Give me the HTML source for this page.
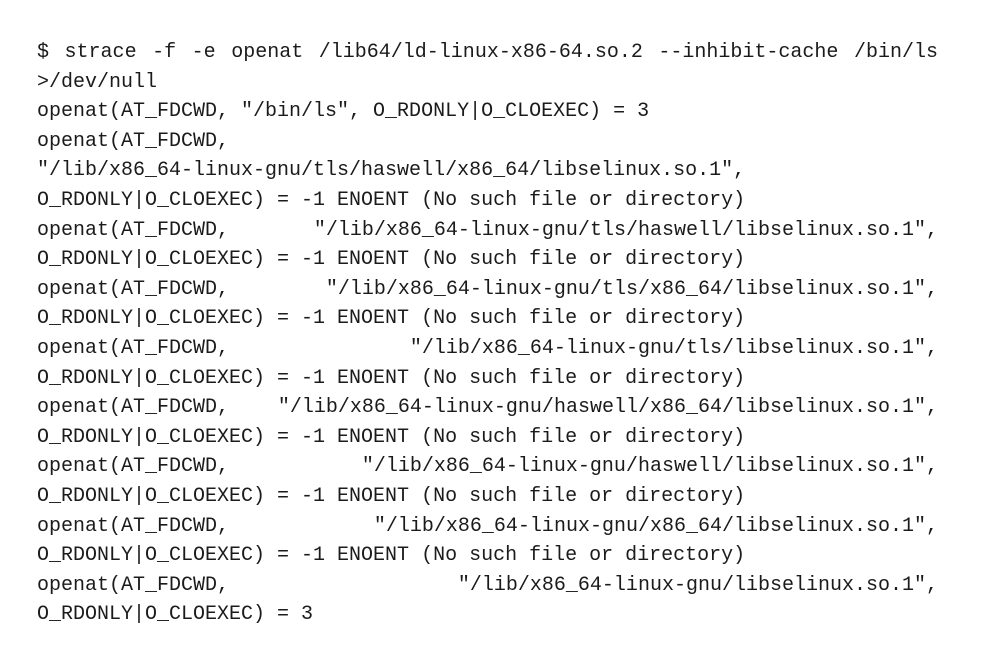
<!DOCTYPE html>
<html><head><meta charset="utf-8"><style>
html,body{margin:0;padding:0;background:#fff;width:986px;height:646px;overflow:hidden}
#t{position:absolute;left:37px;top:38px;width:901px;font-family:"Liberation Mono",monospace;font-size:20px;line-height:29.6px;color:#1b1b1b}
.l{white-space:pre;height:29.6px}
.j{white-space:normal;text-align:justify;text-align-last:justify;height:29.6px;overflow:hidden}
</style></head><body><div id="t">
<div class="j">$ strace -f -e openat /lib64/ld-linux-x86-64.so.2 --inhibit-cache /bin/ls</div>
<div class="l">&gt;/dev/null</div>
<div class="l">openat(AT_FDCWD, "/bin/ls", O_RDONLY|O_CLOEXEC) = 3</div>
<div class="l">openat(AT_FDCWD,</div>
<div class="l">"/lib/x86_64-linux-gnu/tls/haswell/x86_64/libselinux.so.1",</div>
<div class="l">O_RDONLY|O_CLOEXEC) = -1 ENOENT (No such file or directory)</div>
<div class="j">openat(AT_FDCWD, "/lib/x86_64-linux-gnu/tls/haswell/libselinux.so.1",</div>
<div class="l">O_RDONLY|O_CLOEXEC) = -1 ENOENT (No such file or directory)</div>
<div class="j">openat(AT_FDCWD, "/lib/x86_64-linux-gnu/tls/x86_64/libselinux.so.1",</div>
<div class="l">O_RDONLY|O_CLOEXEC) = -1 ENOENT (No such file or directory)</div>
<div class="j">openat(AT_FDCWD, "/lib/x86_64-linux-gnu/tls/libselinux.so.1",</div>
<div class="l">O_RDONLY|O_CLOEXEC) = -1 ENOENT (No such file or directory)</div>
<div class="j">openat(AT_FDCWD, "/lib/x86_64-linux-gnu/haswell/x86_64/libselinux.so.1",</div>
<div class="l">O_RDONLY|O_CLOEXEC) = -1 ENOENT (No such file or directory)</div>
<div class="j">openat(AT_FDCWD, "/lib/x86_64-linux-gnu/haswell/libselinux.so.1",</div>
<div class="l">O_RDONLY|O_CLOEXEC) = -1 ENOENT (No such file or directory)</div>
<div class="j">openat(AT_FDCWD, "/lib/x86_64-linux-gnu/x86_64/libselinux.so.1",</div>
<div class="l">O_RDONLY|O_CLOEXEC) = -1 ENOENT (No such file or directory)</div>
<div class="j">openat(AT_FDCWD, "/lib/x86_64-linux-gnu/libselinux.so.1",</div>
<div class="l">O_RDONLY|O_CLOEXEC) = 3</div>
</div></body></html>
